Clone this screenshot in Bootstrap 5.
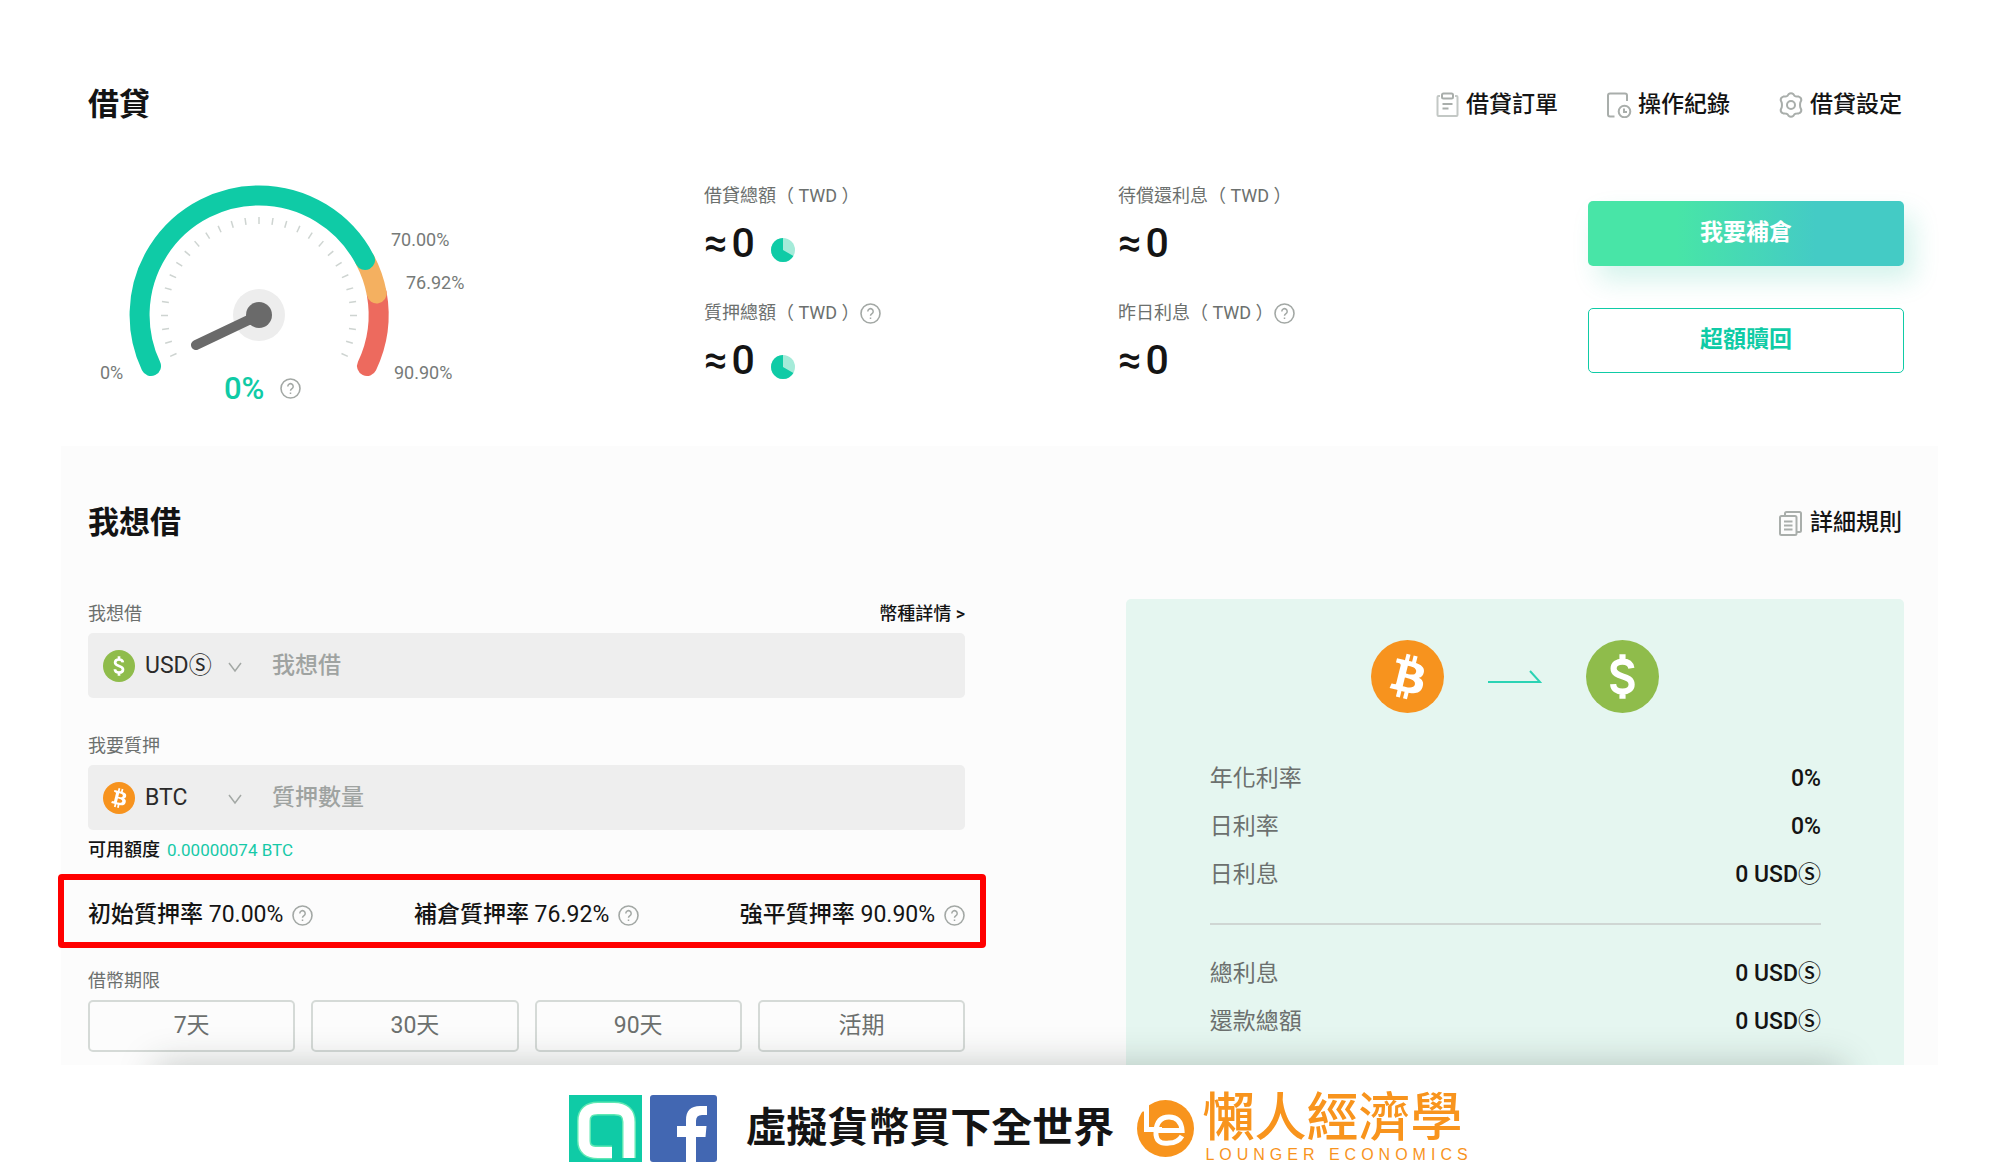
<!DOCTYPE html>
<html lang="zh-Hant">
<head>
<meta charset="utf-8">
<meta name="viewport" content="width=device-width, initial-scale=1">
<title>借貸</title>
<link href="https://cdn.jsdelivr.net/npm/bootstrap@5.3.0/dist/css/bootstrap.min.css" rel="stylesheet">
<style>
  body { font-family: Roboto, "Noto Sans CJK TC", sans-serif; font-size: 23px; line-height: 36px; color: #141414; background: #fff; }
  .page-wrap { padding: 84px 62px 0 61px; }
  .inset { padding-left: 27px; padding-right: 34px; }
  .title-text { font-size: 31px; line-height: 42px; font-weight: 700; margin: 0; }
  .tool-link { color: #141414; text-decoration: none; font-weight: 500; display: flex; align-items: center; gap: 6px; line-height: 42px; padding-right: 2px; }
  .tool-links { gap: 46px; }
  .tool-link svg { width: 26px; height: 26px; fill: none; stroke: #a9aeab; stroke-width: 2; }
  .hint-icon { width: 21px; height: 21px; fill: none; stroke: #a3a8a5; stroke-width: 2; flex: none; }
  .overview { display: grid; grid-template-columns: 616fr 414fr 470fr 316fr; margin-top: 54px; padding-bottom: 26px; }
  .gauge { width: 400px; height: 240px; display: block; font-size: 18px; fill: #767a78; }
  .gauge-value { font-size: 31px; font-weight: 500; fill: #0fcba6; }
  .stat-list { display: flex; flex-direction: column; gap: 23px; padding-top: 1px; }
  .caption-text { font-size: 18px; line-height: 30px; color: #6c706e; }
  .stat-value { display: flex; align-items: center; gap: 4px; font-size: 41px; line-height: 64px; font-weight: 500; }
  .pie { width: 24px; height: 24px; margin-left: 12px; margin-top: 14px; }
  .side-actions { display: flex; flex-direction: column; gap: 42px; padding-top: 21px; }
  .side-actions .btn { height: 65px; font-size: 23px; font-weight: 700; border-radius: 5px; }
  .btn-fill { color: #fff; border: 0; background: linear-gradient(90deg, #48e5a7 28%, #44cbc5 72%); box-shadow: 10px 14px 26px rgba(20, 190, 150, .18); }
  .btn-line { color: #0fcba6; border: 1px solid #0fcba6; background: #fff; }
  .loan-panel { position: relative; clip-path: inset(0 -10px 0 -10px); background: #fcfcfc; padding-top: 56px; }
  .loan-panel::after { content: ""; position: absolute; top: 100%; left: 94px; right: 94px; height: 80px; box-shadow: 0 0 36px rgba(30, 45, 38, .26); }
  .panel-cols { display: flex; justify-content: space-between; margin-top: 55px; }
  .form-col { width: 48.3%; padding-bottom: 13px; }
  .second-field { margin-top: 33px; }
  .quote-col { width: 42.85%; background: #e5f6f0; border-radius: 5px 5px 0 0; padding: 41px 83px 16px 84px; }
  .detail-link { font-size: 18px; line-height: 30px; font-weight: 500; color: #141414; text-decoration: none; }
  .amount-box { display: flex; align-items: center; height: 65px; margin-top: 4px; padding-left: 15px; background: #eee; border-radius: 5px; }
  .amount-box > svg { width: 32px; height: 32px; flex: none; }
  .picker { position: relative; width: 97px; margin-left: 10px; flex: none; }
  .picker select { appearance: none; width: 100%; border: 0; padding: 0; background: transparent; color: #2a2a2a; }
  .picker svg { position: absolute; right: 0; top: 14px; width: 14px; height: 11px; pointer-events: none; }
  .amount-box input { flex: 1; min-width: 0; border: 0; background: transparent; padding: 0; margin-left: 30px; outline: 0; font-weight: 500; }
  .amount-box input::placeholder { color: #9fa3a1; opacity: 1; }
  .avail { display: flex; gap: 7px; font-size: 18px; line-height: 28px; font-weight: 500; margin-top: 6px; }
  .avail span { font-size: 17px; font-weight: 400; color: #17c9a8; }
  .rate-box { display: flex; justify-content: space-between; margin: 10px -21px 18px -30px; padding: 17px 15px 9px 24px; border: 6px solid #f00; border-radius: 4px; font-weight: 500; }
  .rate-box span { display: flex; align-items: center; gap: 9px; }
  .rate-num { font-weight: 400; }
  .terms { display: grid; grid-template-columns: repeat(4, 1fr); gap: 16px; margin-top: 4px; }
  .terms .btn { height: 52px; padding: 0; font-size: 23px; color: #6c706e; border: 2px solid #d5dad7; border-radius: 5px; }
  .pair { display: flex; justify-content: center; align-items: center; gap: 44px; margin-bottom: 42px; }
  .quote-row { display: flex; justify-content: space-between; line-height: 48px; margin: 0; }
  .quote-row dt { font-weight: 400; color: #6c706e; }
  .quote-row dd { margin: 0; font-weight: 500; }
  .rule { height: 2px; background: #cfd6d3; margin: 24px 0 25px; }
  .brand-bar { display: flex; justify-content: center; align-items: center; height: 110px; padding: 16px 0 0 42px; }
  .slogan { font-size: 41px; font-weight: 700; line-height: 67px; margin: 0 23px 0 28px; }
  .brand-name { color: #f8941d; margin-left: 8px; }
  .brand-main { font-size: 52px; line-height: 54px; font-weight: 500; }
  .brand-sub { font: 16px/18px "Liberation Sans", sans-serif; letter-spacing: 5px; padding-left: 3px; white-space: nowrap; }
</style>
<script src="https://cdn.jsdelivr.net/npm/bootstrap@5.3.0/dist/js/bootstrap.bundle.min.js"></script>
</head>
<body>
<svg width="0" height="0" class="position-absolute" aria-hidden="true">
  <symbol id="hint" viewBox="0 0 21 21"><circle cx="10.5" cy="10.5" r="9.5" stroke-width="1.6"/><path d="M7.8 8.4a2.7 2.7 0 1 1 4.2 2.2c-1 .7-1.5 1.1-1.5 2.2M10.5 14.4v1.6" stroke-width="1.5"/></symbol>
  <symbol id="pie" viewBox="0 0 24 24"><circle cx="12" cy="12" r="12" fill="#a5ebd9"/><path d="M12 12V0a12 12 0 1 0 10.4 18z" fill="#0fcba6"/></symbol>
  <symbol id="usd" viewBox="0 0 32 32"><circle cx="16" cy="16" r="16" fill="#8fbc4b"/><path d="M19.900 12.400c-.3-1.900-1.700-2.900-3.900-2.900-2.400 0-3.900 1.200-3.900 3 0 4.400 7.900 2.500 7.900 7 0 1.900-1.600 3.100-4 3.100s-4-1.200-4.100-3.300M16 6.200v3.200M16 22.600v3.200" fill="none" stroke="#fff" stroke-width="2.700"/></symbol>
  <symbol id="btc" viewBox="0 0 32 32"><circle cx="16" cy="16" r="16" fill="#f7931e"/><path fill="#fff" d="M23.189 14.02c.314-2.096-1.283-3.223-3.465-3.975l.708-2.84-1.728-.43-.69 2.765c-.454-.114-.92-.22-1.385-.326l.695-2.783L15.596 6l-.708 2.839c-.376-.086-.746-.17-1.104-.26l.002-.009-2.384-.595-.46 1.846s1.283.294 1.256.312c.7.175.826.638.805 1.006l-.806 3.235c.048.012.11.03.18.057l-.183-.045-1.13 4.532c-.086.212-.303.531-.793.41.018.025-1.256-.313-1.256-.313l-.858 1.978 2.25.561c.418.105.828.215 1.231.318l-.715 2.872 1.727.43.708-2.84c.472.127.93.245 1.378.357l-.706 2.828 1.728.43.715-2.866c2.948.558 5.164.333 6.097-2.333.752-2.146-.037-3.385-1.588-4.192 1.13-.26 1.98-1.003 2.207-2.538zm-3.95 5.538c-.533 2.147-4.148.986-5.32.695l.95-3.805c1.172.293 4.929.872 4.37 3.11zm.535-5.569c-.487 1.953-3.495.96-4.47.717l.86-3.45c.975.243 4.118.696 3.61 2.733z"/></symbol>
  <symbol id="chev" viewBox="0 0 14 11"><path d="M1 1l6 8 6-8" fill="none" stroke="#a3a8a5" stroke-width="1.500"/></symbol>
</svg>

<main class="page-wrap">
  <section class="inset">
    <header class="d-flex justify-content-between">
      <h1 class="title-text">借貸</h1>
      <nav class="tool-links d-flex">
        <a class="tool-link" href="#"><svg viewBox="0 0 26 26"><path d="M6 4H4.500q-1 0-1 1v18q0 1 1 1h18q1 0 1-1V5q0-1-1-1H21" stroke="#c3c8c5"/><rect x="8" y="1.500" width="11" height="5" rx="1.500"/><path d="M8.500 12h10M8.500 16.500h6"/></svg>借貸訂單</a>
        <a class="tool-link" href="#"><svg viewBox="0 0 26 26"><path d="M8.500 24.500H4q-2 0-2-2V3.500q0-2 2-2h15q2 0 2 2V9"/><circle cx="18.500" cy="19.500" r="5.800"/><path d="M18 16.500v3.500h3"/></svg>操作紀錄</a>
        <a class="tool-link" href="#"><svg viewBox="0 0 26 26"><path d="M10.500 2.300q2.500-2.200 5 0l1 1.500q1 .7 2.200.7l2 .1q2.800.9 2.600 3.600l-1 2.300q-.5 2.500 0 5l1 2.300q.2 2.700-2.600 3.600l-2 .1q-1.200 0-2.200.7l-1 1.500q-2.500 2.200-5 0l-1-1.500q-1-.7-2.200-.7l-2-.1q-2.800-.9-2.600-3.600l1-2.300q.5-2.500 0-5l-1-2.300q-.2-2.700 2.600-3.600l2-.1q1.200 0 2.200-.7z"/><circle cx="13" cy="13" r="4"/></svg>借貸設定</a>
      </nav>
    </header>

    <div class="overview">
      <svg class="gauge" viewBox="0 0 400 240" role="img" aria-label="質押率">
        <g fill="none" stroke-width="20" stroke-linecap="round">
          <path d="M288.700 113.400A119.500 119.500 0 0 1 279 186" stroke="#ed6a5e"/>
          <path d="M277 80A119.500 119.500 0 0 1 288.700 113.400" stroke="#f4b060"/>
          <path d="M63 186A119.500 119.500 0 0 1 171 15.500A119.500 119.500 0 0 1 277 80" stroke="#0fcba6"/>
        </g>
        <g id="ticks" stroke="#ced4d1" stroke-width="1.500"></g>
        <circle cx="171" cy="135" r="26" fill="#ededed"/>
        <path d="M171 135l-63 30" stroke="#6a6a6a" stroke-width="10" stroke-linecap="round"/>
        <circle cx="171" cy="135" r="13" fill="#6a6a6a"/>
        <text x="303" y="66">70.00%</text>
        <text x="318" y="109">76.92%</text>
        <text x="306" y="199">90.90%</text>
        <text x="12" y="199">0%</text>
        <text class="gauge-value" x="136" y="219">0%</text>
        <use href="#hint" x="192" y="198" width="21" height="21" fill="none" stroke="#a3a8a5"/>
      </svg>
      <div class="stat-list">
        <div>
          <div class="caption-text">借貸總額（ TWD ）</div>
          <div class="stat-value"><span>≈</span><span>0</span><svg class="pie"><use href="#pie"/></svg></div>
        </div>
        <div>
          <div class="caption-text d-flex align-items-center">質押總額（ TWD ）<svg class="hint-icon"><use href="#hint"/></svg></div>
          <div class="stat-value"><span>≈</span><span>0</span><svg class="pie"><use href="#pie"/></svg></div>
        </div>
      </div>
      <div class="stat-list">
        <div>
          <div class="caption-text">待償還利息（ TWD ）</div>
          <div class="stat-value"><span>≈</span><span>0</span></div>
        </div>
        <div>
          <div class="caption-text d-flex align-items-center">昨日利息（ TWD ）<svg class="hint-icon"><use href="#hint"/></svg></div>
          <div class="stat-value"><span>≈</span><span>0</span></div>
        </div>
      </div>
      <div class="side-actions">
        <button type="button" class="btn btn-fill">我要補倉</button>
        <button type="button" class="btn btn-line">超額贖回</button>
      </div>
    </div>
  </section>

  <section class="loan-panel inset">
    <header class="d-flex justify-content-between">
      <h2 class="title-text">我想借</h2>
      <a class="tool-link" href="#"><svg viewBox="0 0 26 26"><path d="M7 5V3.500q0-1.500 1.500-1.500h13q1.500 0 1.500 1.500v17q0 1.500-1.500 1.500H19"/><rect x="2" y="6" width="16.500" height="19" rx="1.500"/><path d="M6 11.500h8.500M6 15.500h8.500M6 19.500h8.500"/></svg>詳細規則</a>
    </header>
    <div class="panel-cols">
      <form class="form-col">
        <div class="d-flex justify-content-between">
          <label class="caption-text" for="borrow">我想借</label>
          <a class="detail-link" href="#">幣種詳情 &gt;</a>
        </div>
        <div class="amount-box">
          <svg><use href="#usd"/></svg>
          <div class="picker"><select aria-label="借款幣種"><option>USDⓈ</option></select><svg><use href="#chev"/></svg></div>
          <input id="borrow" type="text" placeholder="我想借">
        </div>
        <label class="caption-text second-field d-block" for="pledge">我要質押</label>
        <div class="amount-box">
          <svg><use href="#btc"/></svg>
          <div class="picker"><select aria-label="質押幣種"><option>BTC</option></select><svg><use href="#chev"/></svg></div>
          <input id="pledge" type="text" placeholder="質押數量">
        </div>
        <div class="avail">可用額度 <span>0.00000074 BTC</span></div>
        <div class="rate-box">
          <span><b class="fw-medium">初始質押率 <i class="rate-num fst-normal">70.00%</i></b><svg class="hint-icon"><use href="#hint"/></svg></span>
          <span><b class="fw-medium">補倉質押率 <i class="rate-num fst-normal">76.92%</i></b><svg class="hint-icon"><use href="#hint"/></svg></span>
          <span><b class="fw-medium">強平質押率 <i class="rate-num fst-normal">90.90%</i></b><svg class="hint-icon"><use href="#hint"/></svg></span>
        </div>
        <div class="caption-text">借幣期限</div>
        <div class="terms">
          <button type="button" class="btn">7天</button>
          <button type="button" class="btn">30天</button>
          <button type="button" class="btn">90天</button>
          <button type="button" class="btn">活期</button>
        </div>
      </form>
      <div class="quote-col">
        <div class="pair">
          <svg width="73" height="73"><use href="#btc"/></svg>
          <svg width="54" height="24" viewBox="0 0 54 24" fill="none" stroke="#2bd3b4" stroke-width="2"><path d="M0 17h52L42 6"/></svg>
          <svg width="73" height="73"><use href="#usd"/></svg>
        </div>
        <dl class="m-0">
          <div class="quote-row"><dt>年化利率</dt><dd>0%</dd></div>
          <div class="quote-row"><dt>日利率</dt><dd>0%</dd></div>
          <div class="quote-row"><dt>日利息</dt><dd>0 USDⓈ</dd></div>
        </dl>
        <div class="rule"></div>
        <dl class="m-0">
          <div class="quote-row"><dt>總利息</dt><dd>0 USDⓈ</dd></div>
          <div class="quote-row"><dt>還款總額</dt><dd>0 USDⓈ</dd></div>
        </dl>
      </div>
    </div>
  </section>
</main>

<footer class="brand-bar">
  <svg width="73" height="67" viewBox="0 0 73 67"><path fill="#0fcba6" d="M0 0h73v67H0z"/><path d="M43 57.500H29Q15 57.500 15 46V26Q15 13.500 29 13.500H45Q60 13.500 60 27V63" fill="none" stroke="#5fe8b4" stroke-width="14"/><path d="M43 57.500H29Q15 57.500 15 46V26Q15 13.500 29 13.500H45Q60 13.500 60 27V63" fill="none" stroke="#fff" stroke-width="11"/></svg>
  <svg class="ms-2" width="67" height="67" viewBox="0 0 67 67"><rect width="67" height="67" rx="3" fill="#4267b2"/><path d="M36 67V42H27V31h9v-6q0-14 14-14h7v9h-5q-6 0-6 6v5h10.500l-1 11H46v25z" fill="#fff"/></svg>
  <div class="slogan">虛擬貨幣買下全世界</div>
  <svg width="57" height="57" viewBox="0 0 57 57"><circle cx="28.500" cy="28.500" r="28.500" fill="#f8941d"/><path d="M0 0h12v6L6 12z" fill="#fff"/><path d="M9.500 4v25.500H25" fill="none" stroke="#fff" stroke-width="5"/><path d="M18 30.500h27Q44 17 32 17T19 31t13 12q9 0 13-7" fill="none" stroke="#fff" stroke-width="5"/></svg>
  <div class="brand-name"><div class="brand-main">懶人經濟學</div><div class="brand-sub">LOUNGER ECONOMICS</div></div>
</footer>
<script>
  // 29 dial marks spread over the 230 degree sweep
  const g = document.getElementById('ticks');
  for (let i = 0; i < 29; i++) {
    const l = document.createElementNS('http://www.w3.org/2000/svg', 'line');
    l.setAttribute('x1', 171); l.setAttribute('x2', 171);
    l.setAttribute('y1', 37); l.setAttribute('y2', 44);
    l.setAttribute('transform', `rotate(${-115 + i * 230 / 28} 171 135)`);
    g.appendChild(l);
  }
</script>
</body>
</html>
